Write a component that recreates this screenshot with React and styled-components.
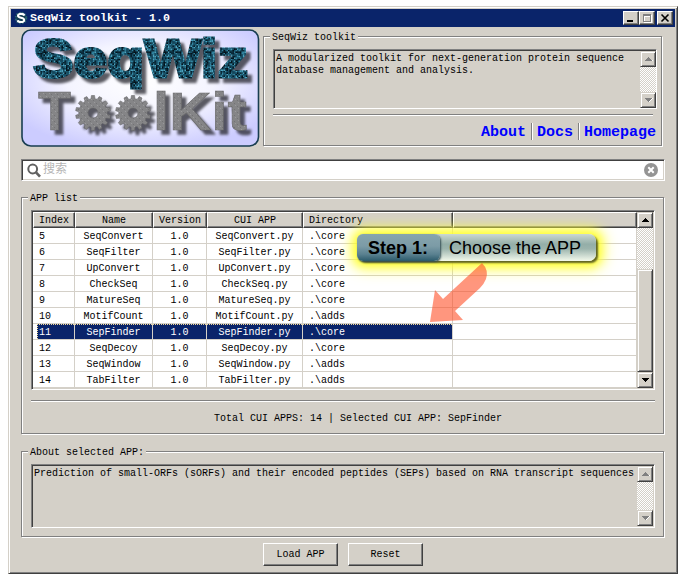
import React from 'react';
import styled, { createGlobalStyle, css } from 'styled-components';

const C = {
  face: '#d4d0c8',
  gray: '#808080',
  dark: '#404040',
  navy: '#0a246a',
  white: '#fff',
};

const Global = createGlobalStyle`
  * { box-sizing: border-box; }
  html, body { margin: 0; background: #fff; }
  body {
    font: 10px/12px "Liberation Mono", "Noto Sans CJK SC", monospace;
    color: #000;
    overflow: hidden;
  }
  button { font: inherit; color: inherit; padding: 0; border: 0; background: none; }
`;

const raised = css`
  background: ${C.face};
  border: 1px solid;
  border-color: ${C.face} ${C.dark} ${C.dark} ${C.face};
  box-shadow: inset 1px 1px 0 ${C.white}, inset -1px -1px 0 ${C.gray};
`;

const sunken = css`
  border: 1px solid;
  border-color: ${C.gray} ${C.white} ${C.white} ${C.gray};
`;

const Page = styled.div`
  position: relative;
  width: 687px;
  height: 584px;
  padding: 6px 0 0 8px;
`;

const Window = styled.main`
  ${raised}
  width: 670px;
  height: 568px;
  padding: 2px;
`;

const TitleBar = styled.header`
  display: flex;
  align-items: center;
  height: 18px;
  padding: 0 2px 0 3px;
  background: ${C.navy};
  color: #fff;
`;

const Title = styled.h1`
  flex: 1;
  margin: 0 0 0 2px;
  font-size: 11.67px;
  line-height: 18px;
  font-weight: bold;
  white-space: pre;
`;

const CaptionButton = styled.button`
  display: flex;
  align-items: center;
  justify-content: center;
  width: 16px;
  height: 14px;
  margin-left: ${(p) => (p.$gap ? 2 : 0)}px;
  background: ${C.face};
  border: 1px solid;
  border-color: #fff ${C.dark} ${C.dark} #fff;
  box-shadow: inset -1px -1px 0 ${C.gray};
`;

const Content = styled.div`
  display: flex;
  flex-direction: column;
  padding: 2px 10px 0 10px;
`;

const Top = styled.section`
  display: flex;
  gap: 3px;
  height: 118px;
`;

const LogoSvg = styled.svg`
  display: block;
  flex: none;
  width: 239px;
  height: 118px;
`;

const Group = styled.section`
  display: flex;
  flex-direction: column;
  width: ${(p) => p.$w}px;
  height: ${(p) => p.$h}px;
  margin-top: ${(p) => p.$mt}px;
  padding: 0 9px;
  border: 1px solid ${C.gray};
  box-shadow: 1px 1px 0 #fff, inset 1px 1px 0 #fff;
`;

const Legend = styled.h2`
  align-self: flex-start;
  height: 12px;
  margin: -6px 0 0 -3px;
  padding: 0 2px;
  background: ${C.face};
  font-size: 10px;
  line-height: 14px;
  font-weight: normal;
  white-space: pre;
`;

const TextBox = styled.div`
  ${sunken}
  display: flex;
  width: ${(p) => p.$w}px;
  height: ${(p) => p.$h}px;
  margin-top: 6px;
  padding: 1px ${(p) => p.$pr}px ${(p) => p.$pb}px 1px;
  box-shadow: inset 1px 1px 0 ${C.dark};
`;

const BoxText = styled.p`
  flex: 1;
  min-width: 0;
  margin: 0;
  padding: 2px 0 0 1px;
  white-space: pre;
`;

const Track = styled.div`
  display: flex;
  flex-direction: column;
  flex: none;
  width: 16px;
  background: repeating-conic-gradient(#fff 0 25%, ${C.face} 0 50%) 0 0 / 2px 2px;
`;

const ArrowButton = styled.button`
  ${raised}
  display: flex;
  align-items: center;
  justify-content: center;
  width: 16px;
  height: 16px;
`;

const TrackGap = styled.div`
  flex: ${(p) => (p.$h ? `0 0 ${p.$h}px` : 1)};
`;

const Thumb = styled.div`
  ${raised}
  flex: 1;
`;

const Rule = styled.hr`
  width: ${(p) => p.$w}px;
  height: 2px;
  margin: ${(p) => p.$mt}px 0 0;
  border: 0;
  border-top: 1px solid ${C.gray};
  border-bottom: 1px solid #fff;
`;

const Links = styled.nav`
  display: flex;
  justify-content: flex-end;
  height: 17px;
  margin: 7px -9px 0 0;
`;

const Link = styled.a`
  height: 17px;
  padding: 0 5px;
  color: #0000ff;
  font-size: 15px;
  line-height: 19px;
  font-weight: bold;

  & + & {
    border-left: 1px solid ${C.gray};
    box-shadow: inset 1px 0 0 #fff;
  }
`;

const Search = styled.label`
  ${sunken}
  display: flex;
  align-items: center;
  width: 644px;
  height: 22px;
  margin-top: 12px;
  padding: 0 6px 0 5px;
  background: #fff;
  box-shadow: inset 1px 1px 0 ${C.dark}, inset -1px -1px 0 ${C.face};
`;

const Placeholder = styled.span`
  flex: 1;
  margin: -4px 0 0 2px;
  color: #b5b5b5;
  font: 12px/16px "Noto Sans CJK SC", sans-serif;
`;

const ListBox = styled.div`
  ${sunken}
  display: flex;
  width: 624px;
  height: 180px;
  margin-top: 6px;
  padding: 1px;
  background: #fff;
  box-shadow: inset 1px 1px 0 ${C.dark}, inset -1px -1px 0 ${C.face};
`;

const Table = styled.div`
  width: 604px;
  flex: none;
`;

const columns = '42px 78px 54px 96px 150px 184px';

const HeadRow = styled.div`
  display: grid;
  grid-template-columns: ${columns};
  height: 16px;
`;

const HeadCell = styled.div`
  height: 16px;
  padding-left: ${(p) => (p.$left ? 5 : 0)}px;
  background: ${C.face};
  border: 1px solid;
  border-color: #fff ${C.dark} ${C.dark} #fff;
  box-shadow: inset -1px -1px 0 ${C.gray};
  line-height: 16px;
  text-align: ${(p) => (p.$left ? 'left' : 'center')};
`;

const Row = styled.div`
  display: grid;
  grid-template-columns: ${columns};
  height: 16px;
  ${(p) =>
    p.$selected &&
    css`
      color: #fff;
      background:
        repeating-linear-gradient(90deg, #f5db95 0 1px, ${C.navy} 1px 2px) 4px 0 / 415px 1px no-repeat,
        repeating-linear-gradient(180deg, #f5db95 0 1px, ${C.navy} 1px 2px) 4px 0 / 1px 15px no-repeat,
        linear-gradient(${C.navy}, ${C.navy}) 4px 0 / 415px 15px no-repeat;
    `}
`;

const Cell = styled.div`
  height: 16px;
  padding-left: ${(p) => (p.$left ? 6 : 0)}px;
  border-right: 1px solid ${C.face};
  border-bottom: 1px solid ${C.face};
  line-height: 18px;
  text-align: ${(p) => (p.$left ? 'left' : 'center')};
`;

const Status = styled.p`
  margin: 11px 0 0 31px;
  text-align: center;
  white-space: pre;
`;

const Actions = styled.footer`
  display: flex;
  gap: 10px;
  margin: 6px 0 0 242px;
`;

const Button = styled.button`
  width: 75px;
  height: 23px;
  background: ${C.face};
  border: 1px solid;
  border-color: #fff ${C.dark} ${C.dark} #fff;
  box-shadow: inset -1px -1px 0 ${C.gray};
`;

const Callout = styled.div`
  position: absolute;
  left: 357px;
  top: 234px;
  display: flex;
  width: 239px;
  height: 27px;
  border-radius: 7px;
  box-shadow: 2px 2px 2px 0 #5d6122, 1px 1px 8px 4px rgba(255, 255, 30, 0.8), 1px 1px 14px 8px rgba(255, 255, 60, 0.65);
  background: linear-gradient(#cbd8d1 0, #94aea8 38%, #9cb4ad 55%, #dce7dc 88%, #f3f9ea 100%);
  font-family: "Liberation Sans", Arial, sans-serif;
  font-size: 18px;
  line-height: 28px;
  white-space: nowrap;
`;

const Step = styled.strong`
  width: 83px;
  border-radius: 6px;
  padding-left: 11px;
  background: linear-gradient(#87a5ae 0, #7c9ba6 45%, #5a8190 75%, #2b5a6b 100%);
  box-shadow: 1px 1px 2px #344d53;
`;

const Choice = styled.span`
  padding-left: 9px;
`;

const Pointer = styled.svg`
  position: absolute;
  left: 428px;
  top: 260px;
`;

const Arrow = ({ down, disabled }) => (
  <svg width="9" height="6" viewBox="0 0 9 6" shapeRendering="crispEdges">
    {disabled && <path d={down ? 'M2 1h7L5 5z' : 'M1 5h8V4z'} fill="#fff" />}
    <path d={down ? 'M1 1h7v1H7v1H6v1H5v1H4V4H3V3H2V2H1z' : 'M4 1h1v1h1v1h1v1h1v1H1V4h1V3h1V2h1z'} fill={disabled ? C.gray : '#000'} />
  </svg>
);

const Scroll = ({ disabled }) => (
  <Track>
    <ArrowButton aria-label="Scroll up"><Arrow disabled={disabled} /></ArrowButton>
    <TrackGap $h={disabled ? 0 : 41} />
    {!disabled && <Thumb />}
    <ArrowButton aria-label="Scroll down"><Arrow down disabled={disabled} /></ArrowButton>
  </Track>
);

const tileColors = ['#06212e', '#164b60', '#2d7b96', '#0b2b3a', '#4ba3be', '#175069', '#03121b', '#3384a0', '#1b566c'];
const tiles = (() => {
  let seed = 7;
  return Array.from({ length: 400 }, (_, i) => {
    seed = (seed * 1103515245 + 12345) % 2147483648;
    return { x: (i % 20) * 1.5, y: Math.floor(i / 20) * 1.5, c: tileColors[Math.floor(seed / 65536) % 9] };
  });
})();

const gearPath = (() => {
  const pts = [];
  const teeth = 14;
  for (let i = 0; i < teeth; i += 1) {
    [[-0.32, 14.2], [-0.2, 17.5], [0.2, 17.5], [0.32, 14.2]].forEach(([o, r]) => {
      const a = ((i + o) / teeth) * Math.PI * 2 - Math.PI / 2;
      pts.push(`${(Math.cos(a) * r).toFixed(2)} ${(Math.sin(a) * r).toFixed(2)}`);
    });
  }
  return `M${pts.join('L')}ZM5 0A5 5 0 1 0 -5 0A5 5 0 1 0 5 0Z`;
})();

const Logo = () => (
  <LogoSvg viewBox="0 0 239 118" role="img" aria-label="SeqWiz ToolKit">
    <defs>
      <radialGradient id="sky" cx=".5" cy=".43" r=".62">
        <stop offset="0" stopColor="#fff" />
        <stop offset=".5" stopColor="#f4f4ff" />
        <stop offset="1" stopColor="#ccccff" />
      </radialGradient>
      <pattern id="mosaic" width="30" height="30" patternUnits="userSpaceOnUse">
        <rect width="30" height="30" fill="#0d3344" />
        {tiles.map((t) => <rect key={`${t.x}-${t.y}`} x={t.x} y={t.y} width="1.5" height="1.5" fill={t.c} />)}
      </pattern>
      <pattern id="stone" width="6" height="6" patternUnits="userSpaceOnUse">
        <rect width="6" height="6" fill="#858587" />
        <path d="M1 1h1v1H1zM4 4h1v1H4z" fill="#9a9a9c" />
        <path d="M3 2h1v1H3zM0 5h1v1H0z" fill="#737375" />
      </pattern>
      <filter id="drop" x="-10%" y="-10%" width="125%" height="130%" colorInterpolationFilters="sRGB">
        <feDropShadow dx="4.5" dy="4.5" stdDeviation="0.9" floodColor="#26262e" floodOpacity=".75" />
      </filter>
    </defs>
    <rect x="1" y="1" width="236.5" height="116" rx="9" fill="url(#sky)" stroke="#183d50" strokeWidth="1.6" />
    <g fontFamily="Liberation Sans, Arial, sans-serif" fontWeight="bold">
      <text x="12" y="47.5" fontSize="53" textLength="215" lengthAdjust="spacingAndGlyphs" fill="url(#mosaic)" stroke="url(#mosaic)" strokeWidth="2.8" filter="url(#drop)">SeqWiz</text>
      <g fill="url(#stone)" stroke="#68686a" strokeWidth=".6" filter="url(#drop)">
        <text x="17" y="101" fontSize="56" textLength="33" lengthAdjust="spacingAndGlyphs">T</text>
        <path d={gearPath} fillRule="evenodd" transform="translate(72 84)" />
        <path d={gearPath} fillRule="evenodd" transform="translate(112 84)" />
        <text x="132" y="101" fontSize="54" textLength="94" lengthAdjust="spacingAndGlyphs">lKit</text>
      </g>
    </g>
  </LogoSvg>
);

const apps = [
  [5, 'SeqConvert', 'core'],
  [6, 'SeqFilter', 'core'],
  [7, 'UpConvert', 'core'],
  [8, 'CheckSeq', 'core'],
  [9, 'MatureSeq', 'core'],
  [10, 'MotifCount', 'adds'],
  [11, 'SepFinder', 'core'],
  [12, 'SeqDecoy', 'core'],
  [13, 'SeqWindow', 'adds'],
  [14, 'TabFilter', 'adds'],
];

export default function App() {
  return (
    <Page>
      <Global />
      <Window>
        <TitleBar>
          <svg width="14" height="14" viewBox="0 0 14 14">
            <circle cx="7" cy="7" r="5.3" fill="#123b50" stroke="#2a6470" strokeWidth="2" strokeDasharray="1.5 1.3" />
            <path d="M10.3 4.6C9.6 2.4 4 2.2 4 4.8c0 2.6 6.2 1.5 6.2 4.3 0 2.7-6 2.5-6.6.1" fill="none" stroke="#fff" strokeWidth="2.1" />
          </svg>
          <Title>SeqWiz toolkit - 1.0</Title>
          <CaptionButton aria-label="Minimize">
            <svg width="12" height="10" shapeRendering="crispEdges"><path d="M2 7h6v2H2z" /></svg>
          </CaptionButton>
          <CaptionButton aria-label="Maximize">
            <svg width="12" height="10" shapeRendering="crispEdges" fill="none">
              <path d="M3.5 2.5h7v7h-7zM3 3.5h8" stroke="#fff" /><path d="M2.5 1.5h7v7h-7zM2 2.5h8" stroke={C.gray} />
            </svg>
          </CaptionButton>
          <CaptionButton $gap aria-label="Close">
            <svg width="12" height="10"><path d="M2.5 1.5l7 7M9.5 1.5l-7 7" stroke="#000" strokeWidth="1.6" /></svg>
          </CaptionButton>
        </TitleBar>
        <Content>
          <Top>
            <Logo />
            <Group $w={399} $h={110} $mt={7}>
              <Legend>SeqWiz toolkit</Legend>
              <TextBox $w={384} $h={60} $pr={0} $pb={0}>
                <BoxText>{'A modularized toolkit for next-generation protein sequence\ndatabase management and analysis.'}</BoxText>
                <Scroll disabled />
              </TextBox>
              <Rule $w={380} $mt={5} />
              <Links><Link>About</Link><Link>Docs</Link><Link>Homepage</Link></Links>
            </Group>
          </Top>
          <Search>
            <svg width="14" height="15" viewBox="0 0 14 15" fill="none" stroke="#606060">
              <circle cx="5.7" cy="6" r="4.4" strokeWidth="2" /><path d="M9 9.4l4 4.2" strokeWidth="2.6" />
            </svg>
            <Placeholder>搜索</Placeholder>
            <svg width="14" height="14" viewBox="0 0 14 14">
              <circle cx="7" cy="7" r="7" fill="#949494" /><path d="M4.3 4.3l5.4 5.4M9.7 4.3l-5.4 5.4" stroke="#fff" strokeWidth="2" />
            </svg>
          </Search>
          <Group $w={643} $h={237} $mt={16}>
            <Legend>APP list</Legend>
            <ListBox>
              <Table>
                <HeadRow>
                  {['Index', 'Name', 'Version', 'CUI APP', 'Directory', ''].map((h, i) => (
                    <HeadCell key={h} $left={i === 0 || i > 3}>{h}</HeadCell>
                  ))}
                </HeadRow>
                {apps.map(([n, name, dir]) => (
                  <Row key={n} $selected={n === 11}>
                    <Cell $left>{n}</Cell>
                    <Cell>{name}</Cell>
                    <Cell>1.0</Cell>
                    <Cell>{name}.py</Cell>
                    <Cell $left>{`.\\${dir}`}</Cell>
                    <Cell />
                  </Row>
                ))}
              </Table>
              <Scroll />
            </ListBox>
            <Rule $w={624} $mt={10} />
            <Status>Total CUI APPS: 14 | Selected CUI APP: SepFinder</Status>
          </Group>
          <Group $w={643} $h={86} $mt={17}>
            <Legend>About selected APP:</Legend>
            <TextBox $w={624} $h={64} $pr={1} $pb={1}>
              <BoxText>Prediction of small-ORFs (sORFs) and their encoded peptides (SEPs) based on RNA transcript sequences</BoxText>
              <Scroll disabled />
            </TextBox>
          </Group>
          <Actions><Button>Load APP</Button><Button>Reset</Button></Actions>
        </Content>
      </Window>
      <Callout><Step>Step 1:</Step><Choice>Choose the APP</Choice></Callout>
      <Pointer width="62" height="64">
        <path d="M2 62L7 30l8 9L54 3q7 7 4 16q-2 5-6 9L27 51l8 9z" fill="#ff4a20" fillOpacity=".58" />
      </Pointer>
    </Page>
  );
}
